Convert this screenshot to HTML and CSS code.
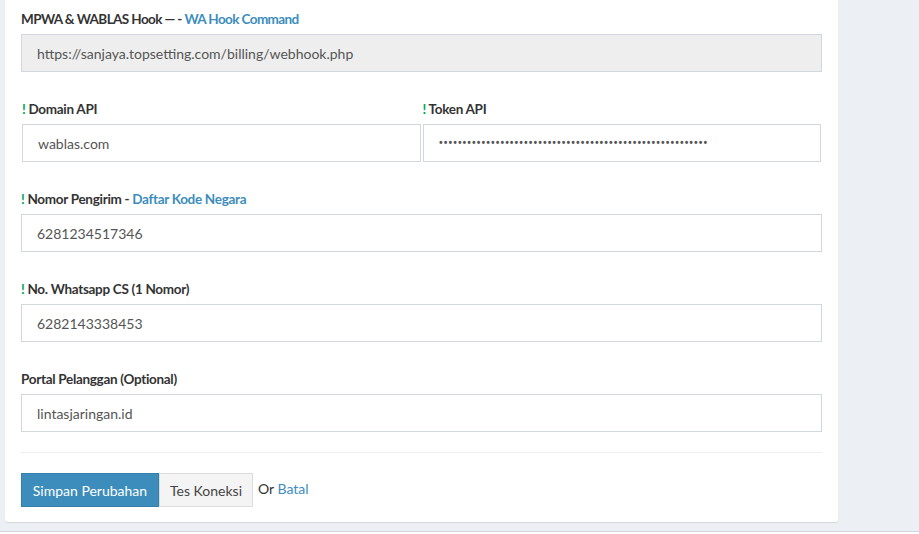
FILE: index.html
```html
<!DOCTYPE html>
<html lang="id">
<head>
<meta charset="utf-8">
<title>Pengaturan WA</title>
<link rel="stylesheet" href="styles.css">
</head>
<body>
<div class="page">
  <div class="content">
    <form class="box">
      <div class="form-group">
        <label class="label title">MPWA &amp; WABLAS Hook — - <a href="#" class="link">WA Hook Command</a></label>
        <input class="input readonly" type="text" readonly value="https://sanjaya.topsetting.com/billing/webhook.php">
      </div>
      <div class="row">
        <div class="form-group">
          <label class="label"><span class="req">!</span> Domain API</label>
          <input class="input" type="text" value="wablas.com">
        </div>
        <div class="form-group">
          <label class="label"><span class="req">!</span> Token API</label>
          <input class="input password" type="password" value="abcdefghijabcdefghijabcdefghijabcdefghijabcdefghijabcdefg">
        </div>
      </div>
      <div class="form-group">
        <label class="label"><span class="req">!</span> Nomor Pengirim - <a href="#" class="link">Daftar Kode Negara</a></label>
        <input class="input" type="text" value="6281234517346">
      </div>
      <div class="form-group">
        <label class="label"><span class="req">!</span> No. Whatsapp CS (1 Nomor)</label>
        <input class="input" type="text" value="6282143338453">
      </div>
      <div class="form-group">
        <label class="label">Portal Pelanggan (Optional)</label>
        <input class="input" type="text" value="lintasjaringan.id">
      </div>
      <hr class="divider">
      <div class="actions">
        <button type="button" class="btn btn-primary">Simpan Perubahan</button><button type="button" class="btn btn-default">Tes Koneksi</button>
        <span class="or">Or <a href="#" class="link">Batal</a></span>
      </div>
    </form>
  </div>
  <footer class="footer"></footer>
</div>
</body>
</html>
```

FILE: styles.css
```css
* { box-sizing: border-box; }
html, body {
  margin: 0;
  padding: 0;
  background: #ecf0f5;
  font-family: "Lato", "Source Sans Pro", "Open Sans", sans-serif;
  font-size: 14px;
  color: #333;
}
.page {
  display: flex;
  flex-direction: column;
}
.content {
  padding: 0 81px 9px 5px;
}
.box {
  background: #fff;
  border-radius: 0 0 3px 3px;
  box-shadow: 0 1px 1px rgba(0,0,0,0.1);
  padding: 9px 16px 15px;
  display: flex;
  flex-direction: column;
}
.form-group {
  display: flex;
  flex-direction: column;
  margin-bottom: 27px;
}
.row {
  display: grid;
  grid-template-columns: 1fr 1fr;
  column-gap: 2px;
  padding: 0 1px;
}
.label {
  display: block;
  font-weight: 700;
  font-size: 13.5px;
  letter-spacing: -0.3px;
  line-height: 20px;
  height: 20px;
  margin-bottom: 5px;
  color: #333;
  white-space: nowrap;
}
.label.title {
  letter-spacing: -0.6px;
}
.req {
  color: #00a65a;
  font-weight: 700;
}
.link {
  color: #3c8dbc;
  text-decoration: none;
}
.input {
  display: block;
  width: 100%;
  height: 38px;
  border: 1px solid #d2d6de;
  border-radius: 0;
  padding: 0 15px;
  font-family: inherit;
  font-size: 14px;
  color: #555;
  background: #fff;
  outline: none;
}
.input.readonly {
  background: #eee;
}
.input.password {
  font-family: "Roboto", sans-serif;
}
.divider {
  border: 0;
  border-top: 1px solid #eee;
  margin: -7px 0 20px;
  height: 0;
}
.actions {
  display: flex;
  align-items: center;
}
.btn {
  height: 34px;
  padding: 0;
  font-family: inherit;
  font-size: 14px;
  border-radius: 0;
  white-space: nowrap;
  cursor: pointer;
}
.btn-primary {
  background: #3c8dbc;
  border: 1px solid #367fa9;
  color: #fff;
  width: 138px;
}
.btn-default {
  background: #f4f4f4;
  border: 1px solid #ddd;
  color: #444;
  width: 94px;
}
.or {
  margin-left: 5px;
  margin-top: -3px;
  color: #333;
}
.footer {
  height: 20px;
  background: #fff;
  border-top: 1px solid #d2d6de;
}
```
